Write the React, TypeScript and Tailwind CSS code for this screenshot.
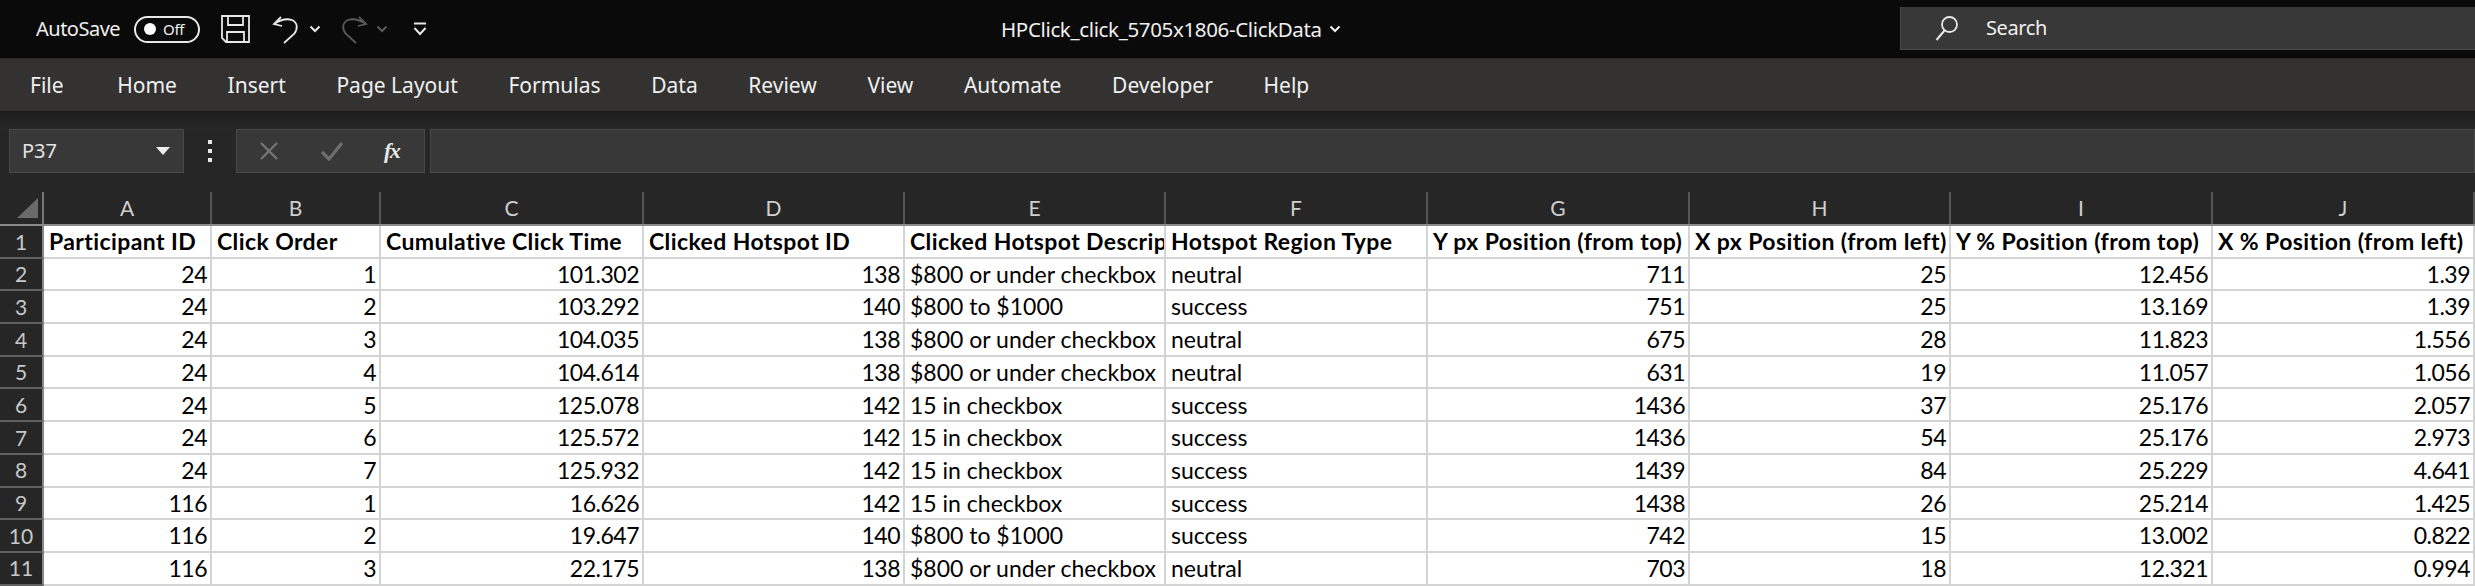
import React from "react";

const tabs = ["File", "Home", "Insert", "Page Layout", "Formulas", "Data", "Review", "View", "Automate", "Developer", "Help"];
const cols = ["A", "B", "C", "D", "E", "F", "G", "H", "I", "J"];
const headers = [
  "Participant ID", "Click Order", "Cumulative Click Time", "Clicked Hotspot ID", "Clicked Hotspot Description",
  "Hotspot Region Type", "Y px Position (from top)", "X px Position (from left)", "Y % Position (from top)", "X % Position (from left)",
];
const rows: string[][] = [
  ["24", "1", "101.302", "138", "$800 or under checkbox", "neutral", "711", "25", "12.456", "1.39"],
  ["24", "2", "103.292", "140", "$800 to $1000", "success", "751", "25", "13.169", "1.39"],
  ["24", "3", "104.035", "138", "$800 or under checkbox", "neutral", "675", "28", "11.823", "1.556"],
  ["24", "4", "104.614", "138", "$800 or under checkbox", "neutral", "631", "19", "11.057", "1.056"],
  ["24", "5", "125.078", "142", "15 in checkbox", "success", "1436", "37", "25.176", "2.057"],
  ["24", "6", "125.572", "142", "15 in checkbox", "success", "1436", "54", "25.176", "2.973"],
  ["24", "7", "125.932", "142", "15 in checkbox", "success", "1439", "84", "25.229", "4.641"],
  ["116", "1", "16.626", "142", "15 in checkbox", "success", "1438", "26", "25.214", "1.425"],
  ["116", "2", "19.647", "140", "$800 to $1000", "success", "742", "15", "13.002", "0.822"],
  ["116", "3", "22.175", "138", "$800 or under checkbox", "neutral", "703", "18", "12.321", "0.994"],
];
const gridCols = "grid grid-cols-[44px_168px_169px_263px_261px_261px_262px_262px_261px_262px_262px]";
const isText = (i: number) => i === 4 || i === 5;

function Chevron({ color = "#e8e8e8", className = "" }: { color?: string; className?: string }) {
  return (
    <svg width="12" height="8" viewBox="0 0 12 8" className={className}>
      <path d="M1.5 1.5 L6 6 L10.5 1.5" fill="none" stroke={color} strokeWidth="2" />
    </svg>
  );
}

function Undo({ color, flip }: { color: string; flip?: boolean }) {
  return (
    <svg width="27" height="29" viewBox="0 0 27 29" style={flip ? { transform: "scaleX(-1)" } : undefined}>
      <path d="M9 2 L2 9 L10 11 M2 9 C8 5 14 3 20 5 C26 8 26 14 22 19 L12 28" fill="none" stroke={color} strokeWidth="1.8" />
    </svg>
  );
}

export default function App() {
  return (
    <div className="w-[2475px] h-[586px] overflow-hidden bg-[#262626] flex flex-col font-['Noto_Sans',sans-serif]">
      {/* title bar */}
      <div className="h-[58px] bg-[#0a0a0a] flex items-center text-[#f0f0f0] shrink-0">
        <span className="ml-[36px] w-[98px] text-[20px] tracking-[-0.5px]">AutoSave</span>
        <div className="w-[66px] h-[27px] rounded-full border-2 border-[#e8e8e8] flex items-center pl-[8px]">
          <span className="w-[12px] h-[12px] rounded-full bg-white" />
          <span className="ml-[7px] text-[15px] tracking-[-0.3px] leading-none">Off</span>
        </div>
        <svg width="29" height="28" viewBox="0 0 29 28" className="ml-[21px]">
          <path d="M1 1 H28 V27 H5 L1 23 Z M7 1 V10 H22 V1 M6 27 V17 H23 V27" fill="none" stroke="#e8e8e8" strokeWidth="1.8" />
        </svg>
        <div className="ml-[22px] flex items-center">
          <Undo color="#e8e8e8" />
        </div>
        <Chevron className="ml-[10px]" />
        <div className="ml-[20px] flex items-center">
          <Undo color="#5a5a5a" flip />
        </div>
        <Chevron color="#5a5a5a" className="ml-[8px]" />
        <svg width="14" height="14" viewBox="0 0 14 14" className="ml-[25px]">
          <path d="M1 1.5 H13 M1.5 6 L7 12 L12.5 6" fill="none" stroke="#e8e8e8" strokeWidth="2" />
        </svg>
        <span className="ml-[574px] w-[322px] whitespace-nowrap text-[20.5px] tracking-[-0.35px]">HPClick_click_5705x1806-ClickData</span>
        <Chevron color="#f0f0f0" className="ml-[6px]" />
        <div className="ml-[559px] flex-1 h-[43px] mb-[1px] bg-[#383838] border-b border-l border-[#4a4a4a] flex items-center pl-[34px]">
          <svg width="24" height="26" viewBox="0 0 24 26">
            <circle cx="14.5" cy="9.5" r="7.5" fill="none" stroke="#e8e8e8" strokeWidth="1.8" />
            <path d="M9.5 15.5 L1.5 25" fill="none" stroke="#e8e8e8" strokeWidth="2" />
          </svg>
          <span className="ml-[27px] text-[20px] tracking-[-0.4px]">Search</span>
        </div>
      </div>

      {/* ribbon tabs */}
      <div className="h-[53px] bg-[#333231] border-t border-[#2a2a2a] flex items-center pl-[30px] pt-[1px] gap-[50.6px] text-[#f0f0f0] text-[21px] shrink-0">
        {tabs.map((t) => (
          <span key={t} className={t === "File" ? "mr-[3px]" : ""}>
            {t}
          </span>
        ))}
      </div>

      {/* formula bar */}
      <div className="h-[18px] bg-gradient-to-b from-[#1c1c1c] to-[#282828] shrink-0" />
      <div className="h-[44px] flex items-stretch pl-[9px] gap-[5px] shrink-0">
        <div className="w-[175px] bg-[#383838] border border-[#484848] flex items-center pl-[12px] pr-[13px] justify-between text-[#e4e4e4] text-[20px]">
          <span>P37</span>
          <svg width="14" height="8" viewBox="0 0 14 8">
            <path d="M0 0 H14 L7 8 Z" fill="#eeeeee" />
          </svg>
        </div>
        <div className="w-[42px] flex flex-col items-center justify-center gap-[5px]">
          <span className="w-[4px] h-[4px] bg-[#e8e8e8]" />
          <span className="w-[4px] h-[4px] bg-[#e8e8e8]" />
          <span className="w-[4px] h-[4px] bg-[#e8e8e8]" />
        </div>
        <div className="w-[189px] bg-[#383838] border border-[#484848] flex items-center pl-[22px]">
          <svg width="20" height="20" viewBox="0 0 20 20">
            <path d="M2 2 L18 18 M18 2 L2 18" fill="none" stroke="#777777" strokeWidth="2.2" />
          </svg>
          <svg width="24" height="20" viewBox="0 0 24 20" className="ml-[41px]">
            <path d="M2 11 L9 18 L22 2" fill="none" stroke="#6e6e6e" strokeWidth="3.2" />
          </svg>
          <span className="ml-[40px] text-[#e8e8e8] text-[22px] italic font-bold font-['Liberation_Serif',serif] tracking-[-1.5px] leading-none">
            fx
          </span>
        </div>
        <div className="flex-1 bg-[#383838] border border-[#484848]" />
      </div>
      <div className="h-[19px] shrink-0" />

      {/* sheet */}
      <div className={`${gridCols} font-['Lato',sans-serif] shrink-0`}>
        <div className="h-[32px] border-r-2 border-[#777777] flex items-center justify-center">
          <svg width="21" height="20" viewBox="0 0 21 20" className="ml-[12px] mb-[1px]">
            <path d="M21 0 V20 H0 Z" fill="#6a6a6a" />
          </svg>
        </div>
        {cols.map((c) => (
          <div key={c} className="h-[32px] border-r-2 border-[#555555] flex items-center justify-center text-[#cfcfcf] text-[21px]">
            {c}
          </div>
        ))}
      </div>
      <div className={`${gridCols} font-['Lato',sans-serif] bg-white border-t-2 border-[#8a8a8a] text-[#000000] text-[23px] shrink-0`}>
        <div className="h-[32.7px] bg-[#262626] border-b-2 border-r-2 border-[#606060] border-r-[#888888] flex items-center justify-center text-[#c8c8c8] text-[21px]">
          1
        </div>
        {headers.map((h) => (
          <div key={h} className="h-[32.7px] overflow-hidden whitespace-nowrap border-b-2 border-r-2 border-[#d4d4d4] flex items-center pl-[5px] font-bold tracking-[0.4px]">
            {h}
          </div>
        ))}
        {rows.map((r, ri) => (
          <React.Fragment key={ri}>
            <div className="h-[32.7px] bg-[#262626] border-b-2 border-r-2 border-[#606060] border-r-[#888888] flex items-center justify-center text-[#c8c8c8] text-[21px]">
              {ri + 2}
            </div>
            {r.map((v, i) => (
              <div
                key={i}
                className={
                  isText(i)
                    ? "h-[32.7px] overflow-hidden whitespace-nowrap border-b-2 border-r-2 border-[#d4d4d4] flex items-center pl-[5px]"
                    : "h-[32.7px] overflow-hidden whitespace-nowrap border-b-2 border-r-2 border-[#d4d4d4] flex items-center justify-end pr-[3px] tracking-[-0.5px]"
                }
              >
                {v}
              </div>
            ))}
          </React.Fragment>
        ))}
      </div>
    </div>
  );
}
